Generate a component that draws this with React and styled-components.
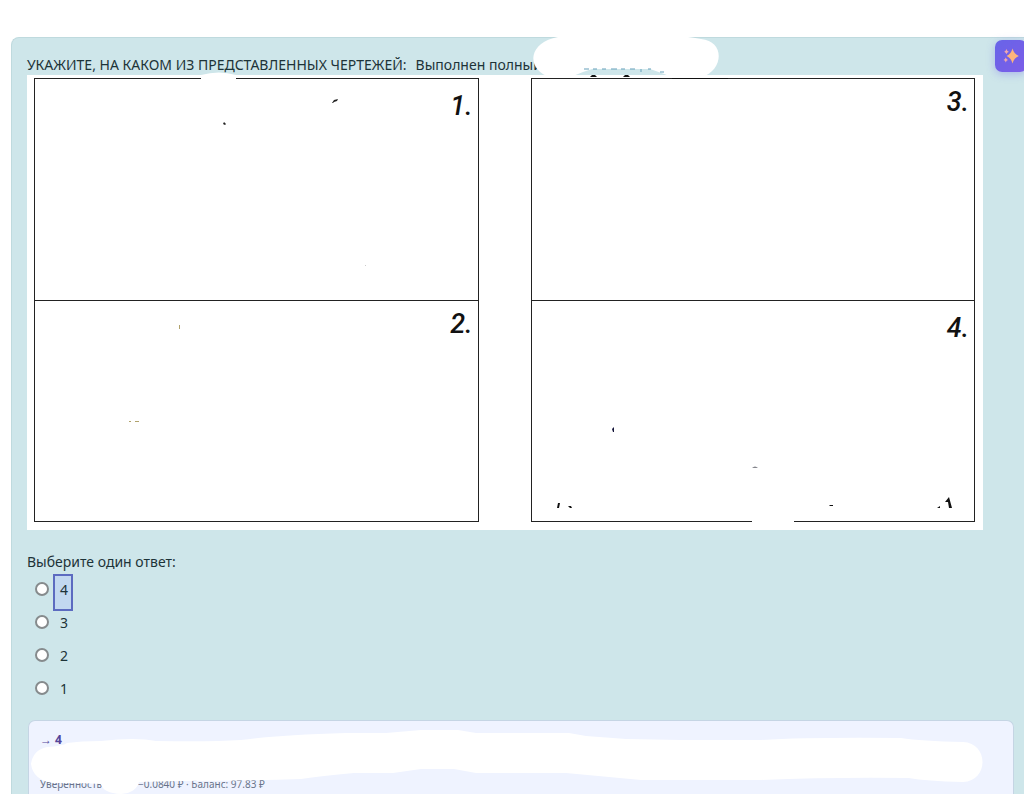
import React, { useState } from 'react';
import styled, { createGlobalStyle } from 'styled-components';

const GlobalStyle = createGlobalStyle`
  * {
    box-sizing: border-box;
  }
  body {
    margin: 0;
    background: #fff;
    color: #1d3338;
    font-family: "Noto Sans", "Open Sans", sans-serif;
    font-size: 14px;
    line-height: 21px;
  }
`;

const Page = styled.main`
  display: flex;
  flex-direction: column;
  height: 100vh;
  overflow: hidden;
  padding: 37px 0 0 11px;
`;

const Question = styled.form`
  position: relative;
  flex: 1;
  display: flex;
  flex-direction: column;
  padding: 16px 10px 0 15px;
  background: #cee6ea;
  border: 1px solid #bfdade;
  border-width: 1px 0 0 1px;
  border-radius: 8px 0 0 0;
`;

const QuestionText = styled.p`
  display: flex;
  gap: 9px;
  margin: 0;
  white-space: nowrap;
`;

const Sheet = styled.div`
  position: relative;
  display: grid;
  grid-template-columns: 1fr 1fr;
  gap: 52px;
  max-width: 956px;
  padding: 3px 8px 8px 7px;
  background: #fff;
`;

const SheetColumn = styled.div`
  border: 1px solid #222;
`;

const Drawing = styled.div`
  height: 221px;
  padding: ${(props) => props.$top}px 5px 0 0;
  color: #111;
  font-family: Roboto, "Liberation Sans", sans-serif;
  font-size: 27px;
  font-style: italic;
  font-weight: 500;
  line-height: 30px;
  text-align: right;

  & + & {
    border-top: 1px solid #222;
  }
`;

const Marks = styled.svg`
  position: absolute;
  top: 0;
  left: 0;
  overflow: visible;
  pointer-events: none;
`;

const Answers = styled.fieldset`
  margin: 21px 0 0;
  padding: 0;
  border: 0;

  legend {
    padding: 0;
  }
`;

const Answer = styled.div`
  display: flex;
  align-items: flex-start;
  gap: 4px;
  height: 33px;
  padding: 2px 0 0 8px;

  input {
    width: 14px;
    height: 14px;
    margin: 8px 0 0;
    appearance: none;
    background: #fff;
    border: 2px solid #868b8d;
    border-radius: 50%;
  }
  input:checked {
    border: 4px solid #5c6bc0;
  }
  label {
    height: 37px;
    padding: 3px 3px 0 5px;
    border: 2px solid ${(props) => (props.$hint ? '#5c6bc0' : 'transparent')};
    background: ${(props) => (props.$hint ? '#c2d8f0' : 'none')};
  }
`;

const Hint = styled.section`
  position: relative;
  flex: 1;
  margin: 16px 0 0 1px;
  padding: 8px 12px 0 11px;
  background: #eff3ff;
  border: 1px solid #c5d5e4;
  border-bottom: 0;
  border-radius: 7px 7px 0 0;
`;

const HintAnswer = styled.strong`
  display: block;
  color: #54459b;
  font-size: 12px;
`;

const HintMeta = styled.div`
  display: flex;
  gap: 36px;
  margin-top: 24px;
  color: #69738a;
  font-size: 10px;
`;

const MagicButton = styled.button`
  position: fixed;
  top: 40px;
  right: -3px;
  display: flex;
  align-items: center;
  justify-content: center;
  width: 32px;
  height: 32px;
  padding: 0;
  border: 0;
  border-radius: 7px;
  background: linear-gradient(135deg, #6864e8, #7c5de8);
  box-shadow: 0 2px 8px rgba(104, 92, 232, 0.35);
  cursor: pointer;
`;

const Sparkles = () => (
  <svg width="16" height="16" viewBox="0 0 16 16" fill="#fdb57c" aria-hidden="true">
    <path d="M9.5 .5 Q11 6.2 15.8 8 Q11 9.8 9.5 15.5 Q8 9.8 3.6 8 Q8 6.2 9.5 .5Z" />
    <path d="M3.4 1 Q3.9 3.2 5.8 3.7 Q3.9 4.2 3.4 6.2 Q2.9 4.2 1.2 3.7 Q2.9 3.2 3.4 1Z" fill="#f0a8ae" />
    <path d="M2.8 9.6 Q3.3 11.6 5 12 Q3.3 12.4 2.8 14.5 Q2.3 12.4 .5 12 Q2.3 11.6 2.8 9.6Z" fill="#f0a8ae" />
  </svg>
);

// origin is one pixel right of the sheet's top left corner
const SheetMarks = () => (
  <Marks width="956" height="455" viewBox="-1 0 956 455" aria-hidden="true">
    <path
      fill="#fff"
      d="M530 -38 H660 Q668 -37 673 -36 C697 -34 696 -5 674 2 H644 Q634 -2 622 -6 H564 Q554 -3 545 1 H519 C498 -8 501 -33 530 -38Z"
    />
    <path fill="#fff" d="M173 6 V0 Q191 -5 208 0 V6Z M724 444 H766 V450 Q743 460 724 450Z" />
    <path stroke="#111" d="M644 3.5 H700" />
    <path stroke="#649fba" d="M556 -6 h5 m4 0 h4 m5 0 h4 m5 0 h6 m4 0 h4 m5 0 h5 m13 0 h3 M613 -6 v3 M632 -3 h4" />
    <path fill="#111" d="M562 2 l2 -2 h3 l2 2z M595 2 l2 -2 h3 l2 2z" />
    <path fill="#222" d="M304 28 l2 -3 4 -1 -1 2 -3 1 -1 1z M195 49 l1 -2 2 2 -1 1z" />
    <path fill="#b1a36d" d="M151 250 h1 v4 h-1z M101 346 h2 v1 h-2z M107 346 h4 v1 h-4z" />
    <path fill="#16163b" d="M584 354 l2 -2 v5 h-1z" />
    <path fill="#84858c" d="M724 393 q3 -3 6 0z" />
    <path fill="#ccc" d="M337 190 h1 v1 h-1z" />
    <path fill="#111" d="M529 433 l1 -5 h2 l-1 5z M540 431 l3 0 1 2 h-2z M802 430 h3 v1 h-4z M909 433 l3 -2 v2z M917 427 l4 -5 3 11 h-3 l-1 -6z" />
  </Marks>
);

const HintMarks = () => (
  <Marks width="986" height="74" viewBox="28 721 986 74" aria-hidden="true">
    <path
      fill="#fff"
      d="M30 764 Q32 750 46 747 Q62 746 66 743 Q80 741 100 741 Q135 737 155 741 Q210 742 240 740 Q275 735 345 733 H385 L420 730 H457 L475 733 H568 L585 736 L625 739 L680 740 H760 Q810 737 900 738 Q920 741 962 742 C988 743 988 781 962 782 Q925 781 908 778 Q830 777 760 780 H640 L608 777 L565 773 H475 L453 769 H420 L392 773 H353 Q320 776 300 779 Q240 781 180 781 L138 782 Q135 793 120 794 Q102 793 100 784 Q80 783 52 783 Q32 780 30 764Z"
    />
  </Marks>
);

const answers = ['4', '3', '2', '1'];

const App = () => {
  const [selected, setSelected] = useState(null);

  return (
    <Page>
      <GlobalStyle />
      <Question>
        <QuestionText>
          <span>УКАЖИТЕ, НА КАКОМ ИЗ ПРЕДСТАВЛЕННЫХ ЧЕРТЕЖЕЙ:</span>
          <span>Выполнен полный</span>
        </QuestionText>
        <Sheet>
          <SheetColumn>
            <Drawing $top={12}>1.</Drawing>
            <Drawing $top={8}>2.</Drawing>
          </SheetColumn>
          <SheetColumn>
            <Drawing $top={8}>3.</Drawing>
            <Drawing $top={12}>4.</Drawing>
          </SheetColumn>
          <SheetMarks />
        </Sheet>
        <Answers>
          <legend>Выберите один ответ:</legend>
          {answers.map((value) => (
            <Answer key={value} $hint={value === '4'}>
              <input
                type="radio"
                id={`answer-${value}`}
                name="answer"
                value={value}
                checked={selected === value}
                onChange={() => setSelected(value)}
              />
              <label htmlFor={`answer-${value}`}>{value}</label>
            </Answer>
          ))}
        </Answers>
        <Hint>
          <HintAnswer>→ 4</HintAnswer>
          <HintMeta>
            <span>Уверенность</span>
            <span>−0.0840 ₽ · Баланс: 97.83 ₽</span>
          </HintMeta>
          <HintMarks />
        </Hint>
      </Question>
      <MagicButton type="button" aria-label="✨">
        <Sparkles />
      </MagicButton>
    </Page>
  );
};

export default App;
